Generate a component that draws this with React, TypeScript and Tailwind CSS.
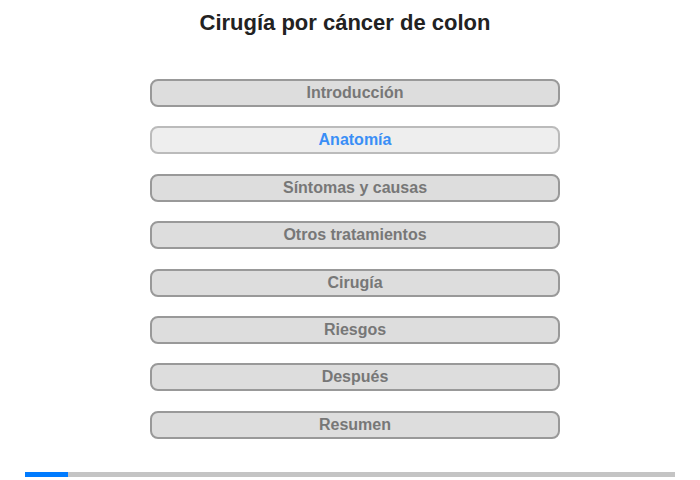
const items = [
  'Introducción',
  'Anatomía',
  'Síntomas y causas',
  'Otros tratamientos',
  'Cirugía',
  'Riesgos',
  'Después',
  'Resumen',
];

export default function App() {
  const active = 1;
  return (
    <div className="w-[700px] h-[480px] bg-white flex flex-col items-center font-['Liberation_Sans',Arial,sans-serif]">
      {/* Title */}
      <h1 className="mt-[9px] mr-[10px] text-[22px] leading-[28px] font-bold text-[#222]">Cirugía por cáncer de colon</h1>

      {/* Menu */}
      <div className="mt-[42px] ml-[10px] flex flex-col gap-[19.4px]">
        {items.map((label, i) => (
          <button
            key={label}
            className={
              i === active
                ? 'w-[410px] h-[28px] rounded-[8px] border-2 border-[#bbb] bg-[#eee] text-[#3a8ef6] text-[16px] font-bold leading-none'
                : 'w-[410px] h-[28px] rounded-[8px] border-2 border-[#999] bg-[#ddd] text-[#777] text-[16px] font-bold leading-none'
            }
          >
            {label}
          </button>
        ))}
      </div>

      {/* Progress */}
      <div className="mt-auto mb-[3px] w-[650px] h-[5px] bg-[#c4c4c4] flex">
        <div className="w-[43px] h-full bg-[#007bff]" />
      </div>
    </div>
  );
}
